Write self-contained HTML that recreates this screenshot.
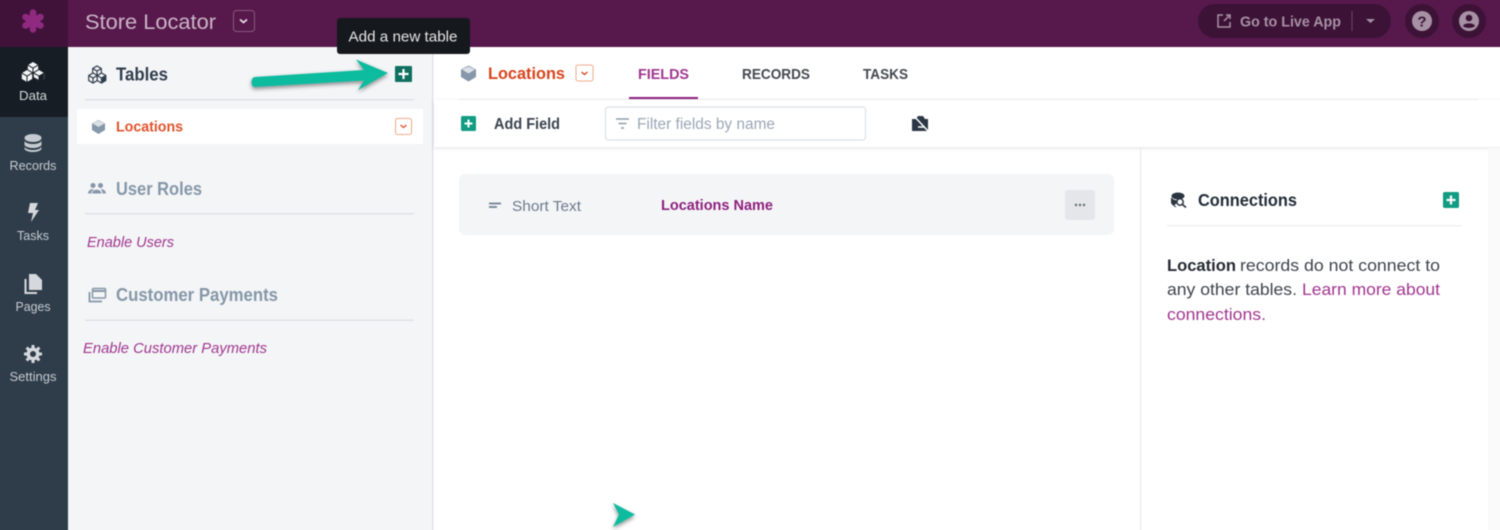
<!DOCTYPE html>
<html><head><meta charset="utf-8"><style>
html,body{margin:0;padding:0;width:1500px;height:530px;overflow:hidden;background:#fff}
#clip{position:relative;width:1500px;height:530px;overflow:hidden;contain:paint}
svg{display:block;position:absolute;left:-10px;top:-10px;filter:blur(.4px)}
text{font-family:"Liberation Sans",sans-serif}
.b{font-weight:700}
</style></head><body>
<div id="clip">
<svg width="1520" height="550" viewBox="-10 -10 1520 550" xmlns="http://www.w3.org/2000/svg">
<defs>
<filter id="sh" x="-20%" y="-50%" width="140%" height="200%"><feDropShadow dx="0" dy="2" stdDeviation="2" flood-color="#000" flood-opacity=".45"/></filter>
<filter id="tb" x="-5%" y="-50%" width="110%" height="200%"><feDropShadow dx="0" dy="1" stdDeviation="2" flood-color="#000" flood-opacity=".12"/></filter>
</defs>
<!-- top bar -->
<rect x="-10" y="-10" width="1520" height="57" fill="#57184c"/>
<rect x="-10" y="-10" width="78" height="57" fill="#40123a"/>
<g stroke="#8f2a80" stroke-width="6.500" stroke-linecap="round"><path d="M33 12.500V29.500M25.500 17L40.500 25.500M40.500 17L25.500 25.500"/></g>
<text x="85" y="29" font-size="21" fill="#c9b5c6" textLength="131" lengthAdjust="spacingAndGlyphs">Store Locator</text>
<rect x="233.500" y="10.500" width="21" height="21" rx="3" fill="none" stroke="#86597f"/>
<path d="M240 19.500L243.500 22.500L247 19.500" fill="none" stroke="#e8dde6" stroke-width="1.800"/>
<!-- right actions -->
<rect x="1198" y="4" width="193" height="34" rx="17" fill="#3c1236"/>
<path d="M1223 15H1218V27H1230V22M1224 21L1230 15M1226 15H1230V19" fill="none" stroke="#a791a4" stroke-width="1.500"/>
<text class="b" x="1240" y="26.500" font-size="15" fill="#a791a4" textLength="101" lengthAdjust="spacingAndGlyphs">Go to Live App</text>
<rect x="1351.500" y="11" width="1" height="20" fill="#6b4565"/>
<path d="M1366 19H1375L1370.500 23Z" fill="#a791a4"/>
<circle cx="1422" cy="21" r="17" fill="#3c1236"/>
<circle cx="1422" cy="21" r="10" fill="#a791a4"/>
<text class="b" x="1422" y="26.500" font-size="15" fill="#3c1236" text-anchor="middle">?</text>
<circle cx="1469" cy="21" r="17" fill="#3c1236"/>
<circle cx="1469" cy="21" r="10" fill="#a791a4"/>
<circle cx="1469" cy="18" r="3.300" fill="#3c1236"/>
<path d="M1463 26C1464 22.500 1474 22.500 1475 26C1473 28.500 1465 28.500 1463 26Z" fill="#3c1236"/>
<!-- left nav -->
<rect x="-10" y="47" width="78" height="493" fill="#2f3d4a"/>
<rect x="-10" y="47" width="78" height="70" fill="#161d24"/>
<g fill="#f4f5f7" stroke="#161d24" stroke-width="1">
<path d="M33 61.500L38.700 64.800V71.200L33 74.500L27.300 71.200V64.800Z"/><path d="M33 68V74.500M27.300 64.800L33 68L38.700 64.800" fill="none"/>
<path d="M27 69.500L32.700 72.800V79.200L27 82.500L21.300 79.200V72.800Z"/><path d="M27 76V82.500M21.300 72.800L27 76L32.700 72.800" fill="none"/>
<path d="M39 69.500L44.700 72.800V79.200L39 82.500L33.300 79.200V72.800Z"/><path d="M39 76V82.500M33.300 72.800L39 76L44.700 72.800" fill="none"/>
</g>
<path d="M33.500 77L39 80V82L33.500 79Z M39.500 76L44 73.500V79L39.500 82Z" fill="#161d24"/>
<text x="33" y="100" font-size="13" fill="#d5d9dd" text-anchor="middle" textLength="28" lengthAdjust="spacingAndGlyphs">Data</text>
<g fill="#c5cbd1"><ellipse cx="33" cy="138" rx="8.500" ry="4"/><path d="M24.500 141C27 145 39 145 41.500 141V145C39 149 27 149 24.500 145Z"/><path d="M24.500 147C27 151 39 151 41.500 147V149C39 153 27 153 24.500 149Z"/></g>
<text x="33" y="170" font-size="13" fill="#c5cbd1" text-anchor="middle" textLength="47" lengthAdjust="spacingAndGlyphs">Records</text>
<path d="M30 203H38L35 210H39L31 222L33 213H28Z" fill="#d5d9dd"/>
<text x="33" y="240" font-size="13" fill="#c5cbd1" text-anchor="middle" textLength="32" lengthAdjust="spacingAndGlyphs">Tasks</text>
<path d="M29 274H36L42 280V290H29Z" fill="#d5d9dd"/><path d="M25.500 279V293H37" fill="none" stroke="#d5d9dd" stroke-width="2"/>
<text x="33" y="311" font-size="13" fill="#c5cbd1" text-anchor="middle" textLength="35" lengthAdjust="spacingAndGlyphs">Pages</text>
<circle cx="33" cy="354" r="6.500" fill="#d5d9dd"/>
<g stroke="#d5d9dd" stroke-width="3"><path d="M33 345V363M24 354H42M26.600 347.600L39.400 360.400M39.400 347.600L26.600 360.400"/></g>
<circle cx="33" cy="354" r="3" fill="#2f3d4a"/>
<text x="33" y="381" font-size="13" fill="#c5cbd1" text-anchor="middle" textLength="47" lengthAdjust="spacingAndGlyphs">Settings</text>
<!-- tables panel -->
<rect x="68" y="47" width="364" height="493" fill="#f4f5f7"/>
<rect x="432" y="47" width="1.500" height="493" fill="#e1e4e8"/>
<g fill="#f4f5f7" stroke="#2f3d4c" stroke-width="1.200">
<path d="M97 66L101.300 68.500V73.500L97 76L92.700 73.500V68.500Z"/><path d="M97 71V76M92.700 68.500L97 71L101.300 68.500" fill="none"/>
<path d="M93 73L97.300 75.500V80.500L93 83L88.700 80.500V75.500Z"/><path d="M93 78V83M88.700 75.500L93 78L97.300 75.500" fill="none"/>
<path d="M101.500 73L105.800 75.500V80.500L101.500 83L97.200 80.500V75.500Z"/><path d="M101.500 78V83M97.200 75.500L101.500 78L105.800 75.500" fill="none"/>
</g>
<path d="M102 78L105.500 76V80L102 82.500Z" fill="#2f3d4c"/>
<text class="b" x="116" y="80.500" font-size="18" fill="#2f3d4c" textLength="52" lengthAdjust="spacingAndGlyphs">Tables</text>
<rect x="395" y="66" width="17" height="16" rx="1" fill="#0f705f"/>
<path d="M403.500 69V79M398.500 74H408.500" stroke="#fff" stroke-width="2.200"/>
<rect x="85" y="99" width="329" height="1.500" fill="#dfe2e6"/>
<rect x="77" y="109" width="346" height="35" fill="#fff"/>
<path d="M98.500 120L105 123.500V130L98.500 134L92 130V123.500Z" fill="#8597a8"/><path d="M92.500 123.500L98.500 127L104.500 123.500L98.500 120.500Z" fill="#dbe0e5"/>
<text class="b" x="116" y="131.500" font-size="15" fill="#e0532a" textLength="67" lengthAdjust="spacingAndGlyphs">Locations</text>
<rect x="395.500" y="118.500" width="16" height="16" rx="2" fill="#fff" stroke="#f0a98a"/>
<path d="M400.500 125L403.500 127.500L406.500 125" fill="none" stroke="#e0532a" stroke-width="1.300"/>
<path d="M88 193.500C88.500 189 93 188.500 94 190C91.500 191 91 192 91.500 193.500Z M92 193.500C92.500 188.500 101 188.500 101.500 193.500Z M102.500 193.500C102.500 191.500 102 190.500 100.500 189.500C103 188.500 105.500 190 106 193.500Z" fill="#8597a8"/>
<circle cx="93" cy="185.500" r="2.500" fill="#8597a8"/><circle cx="100.500" cy="185.500" r="2.500" fill="#8597a8"/>
<text class="b" x="116" y="195" font-size="18" fill="#8597a8" textLength="86" lengthAdjust="spacingAndGlyphs">User Roles</text>
<rect x="85" y="213" width="329" height="1.500" fill="#dfe2e6"/>
<text x="87" y="247" font-size="15" font-style="italic" fill="#a0368f" textLength="87" lengthAdjust="spacingAndGlyphs">Enable Users</text>
<rect x="92.500" y="288.500" width="13" height="9.500" rx="1" fill="none" stroke="#8597a8" stroke-width="1.500"/><rect x="92.500" y="290" width="13" height="2" fill="#8597a8"/>
<path d="M89.500 292V301.500H102" fill="none" stroke="#8597a8" stroke-width="1.800"/>
<text class="b" x="116" y="301" font-size="18" fill="#8597a8" textLength="162" lengthAdjust="spacingAndGlyphs">Customer Payments</text>
<rect x="85" y="319.500" width="329" height="1.500" fill="#dfe2e6"/>
<text x="83" y="353" font-size="15" font-style="italic" fill="#a0368f" textLength="184" lengthAdjust="spacingAndGlyphs">Enable Customer Payments</text>
<!-- tooltip -->
<rect x="337" y="18" width="133" height="36" rx="3" fill="#15191e"/>
<text x="348.500" y="41.500" font-size="15" fill="#e4e5e6" textLength="109" lengthAdjust="spacingAndGlyphs">Add a new table</text>
<!-- arrow -->
<path filter="url(#sh)" d="M388 73L356 59.500L364 70L255 77Q251.500 77.500 251.500 82Q251.500 87 255 87L364 80.500L358 90Z" fill="#0ebb9f"/>
<!-- header -->
<path d="M468.500 65.500L476 69.500V77L468.500 81.500L461 77V69.500Z" fill="#8597a8"/><path d="M462 69.500L468.500 73.500L475 69.500L468.500 66.500Z" fill="#dbe0e5"/>
<text class="b" x="488" y="79" font-size="17" fill="#d8431c" textLength="77" lengthAdjust="spacingAndGlyphs">Locations</text>
<rect x="576" y="65" width="17" height="16" rx="2" fill="#fff" stroke="#f0a98a"/>
<path d="M581.500 72L584.500 74.500L587.500 72" fill="none" stroke="#d8431c" stroke-width="1.300"/>
<text class="b" x="638" y="79" font-size="15" fill="#a0368f" textLength="51" lengthAdjust="spacingAndGlyphs">FIELDS</text>
<text class="b" x="742" y="79" font-size="15" fill="#444a50" textLength="68" lengthAdjust="spacingAndGlyphs">RECORDS</text>
<text class="b" x="863" y="79" font-size="15" fill="#444a50" textLength="45" lengthAdjust="spacingAndGlyphs">TASKS</text>
<!-- toolbar -->
<rect x="434" y="100" width="1076" height="47" fill="#fff" filter="url(#tb)"/>
<rect x="459" y="99" width="1019" height="1" fill="#e8eaed"/>
<rect x="629" y="97" width="69" height="2" fill="#8e1f7f"/>
<rect x="461" y="116" width="15" height="15" rx="1.500" fill="#119c82"/>
<path d="M468.500 119.500V127.500M464.500 123.500H472.500" stroke="#fff" stroke-width="2"/>
<text class="b" x="494" y="129" font-size="15.500" fill="#3a4450" textLength="66" lengthAdjust="spacingAndGlyphs">Add Field</text>
<rect x="605.500" y="107" width="260" height="33" rx="3" fill="#fff" stroke="#dde1e7" stroke-width="1.200"/>
<path d="M616 119H629M618.500 123.500H626.500M621 128H624" stroke="#8f9dac" stroke-width="1.500"/>
<text x="637" y="129" font-size="15.500" fill="#9aa7b5" textLength="138" lengthAdjust="spacingAndGlyphs">Filter fields by name</text>
<path d="M912 119H916L918 116H923L925 119H928V131H912Z" fill="#2b3746"/>
<path d="M913 115L928 131" stroke="#fff" stroke-width="1.500"/>
<path d="M918 127H924" stroke="#fff" stroke-width="1.500"/>
<!-- content -->
<rect x="1140" y="148" width="1" height="392" fill="#e8eaed"/>
<rect x="1488" y="148" width="22" height="392" fill="#fafafa"/>
<rect x="459" y="174" width="655" height="61" rx="6" fill="#f4f5f7"/>
<path d="M489 203.500H501M489 207H497" stroke="#6f7f90" stroke-width="1.700"/>
<text x="512" y="211" font-size="15" fill="#6b7a8b" textLength="69" lengthAdjust="spacingAndGlyphs">Short Text</text>
<text class="b" x="661" y="210" font-size="14.500" fill="#8e1f7f" textLength="112" lengthAdjust="spacingAndGlyphs">Locations Name</text>
<rect x="1065" y="190" width="30" height="30" rx="3" fill="#e4e6e9"/>
<g fill="#5c6773"><circle cx="1076" cy="205" r="1.200"/><circle cx="1080" cy="205" r="1.200"/><circle cx="1084" cy="205" r="1.200"/></g>
<!-- connections -->
<ellipse cx="1178" cy="196" rx="6.500" ry="3.500" fill="#2b3540"/>
<path d="M1171.500 198C1173 201 1177 201 1178 201L1174 205L1171.500 203Z M1172 204L1176 207" fill="#2b3540" stroke="#2b3540"/>
<circle cx="1180" cy="202" r="3.200" fill="#fff" stroke="#2b3540" stroke-width="1.500"/><path d="M1182.500 204.500L1186 207.500" stroke="#2b3540" stroke-width="1.700"/>
<text class="b" x="1198" y="206" font-size="17.500" fill="#222c38" textLength="99" lengthAdjust="spacingAndGlyphs">Connections</text>
<rect x="1443" y="192" width="16" height="16" rx="1.500" fill="#119c82"/>
<path d="M1451 195.500V204.500M1446.500 200H1455.500" stroke="#fff" stroke-width="2.200"/>
<rect x="1167" y="225" width="295" height="1.500" fill="#eff0f2"/>
<text class="b" x="1167" y="271" font-size="17" fill="#232a32" textLength="69" lengthAdjust="spacingAndGlyphs">Location</text>
<text x="1240" y="271" font-size="17" fill="#3d444c" textLength="200" lengthAdjust="spacingAndGlyphs">records do not connect to</text>
<text x="1167" y="295" font-size="17" fill="#3d444c" textLength="130" lengthAdjust="spacingAndGlyphs">any other tables.</text>
<text x="1302" y="295" font-size="17" fill="#a0368f" textLength="138" lengthAdjust="spacingAndGlyphs">Learn more about</text>
<text x="1167" y="320" font-size="17" fill="#a0368f" textLength="99" lengthAdjust="spacingAndGlyphs">connections.</text>
<!-- cursor arrow -->
<path filter="url(#sh)" d="M613 503L635 514.500L613 527L619 514.500Z" fill="#0ebb9f"/>
</svg>
</div>
</body></html>
